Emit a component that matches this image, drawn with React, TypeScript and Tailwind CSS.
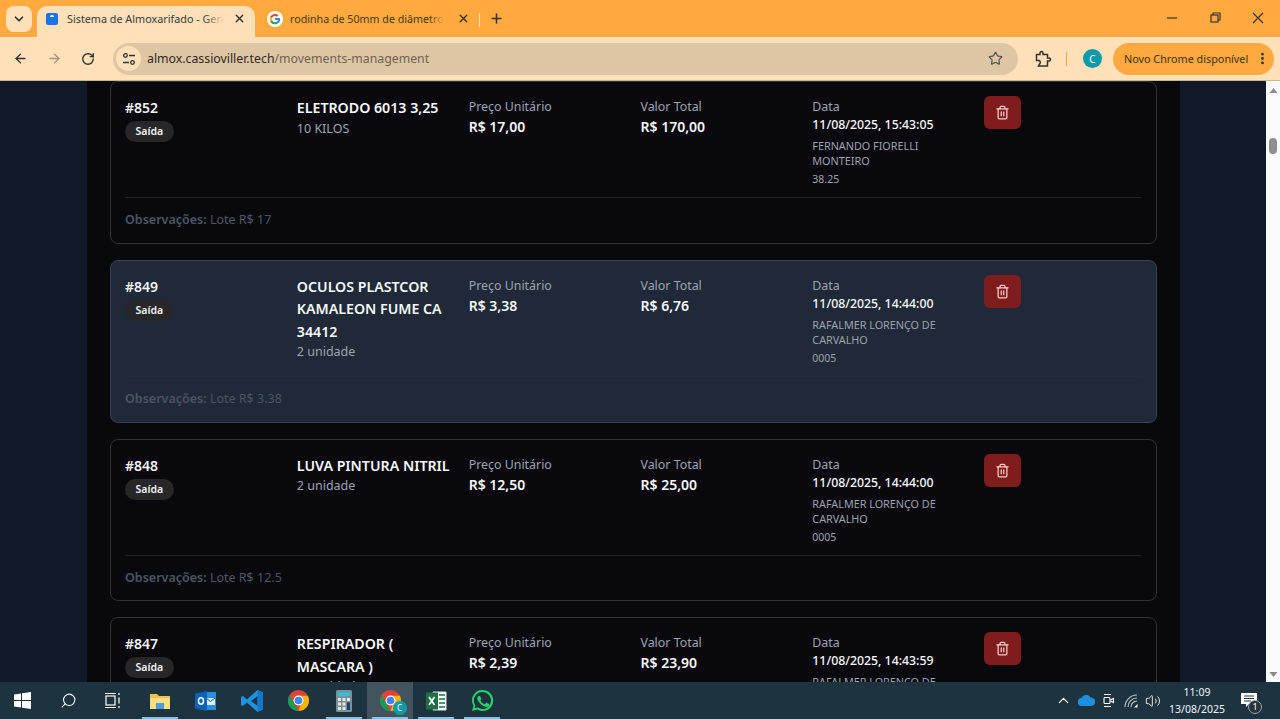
import React from "react";
import { ArrowLeft, ArrowRight, ChevronDown, ChevronUp, EllipsisVertical, Plus, RotateCw, Search, Star, Trash2, Volume2, X } from "lucide-react";

type Mov = {
  id: string; name: string; qty: string; unit: string; total: string; date: string;
  user: string; code: string; obs: string; active?: boolean;
};

const moves: Mov[] = [
  { id: "#852", name: "ELETRODO 6013 3,25", qty: "10 KILOS", unit: "R$ 17,00", total: "R$ 170,00", date: "11/08/2025, 15:43:05", user: "FERNANDO FIORELLI MONTEIRO", code: "38.25", obs: "Lote R$ 17" },
  { id: "#849", name: "OCULOS PLASTCOR KAMALEON FUME CA 34412", qty: "2 unidade", unit: "R$ 3,38", total: "R$ 6,76", date: "11/08/2025, 14:44:00", user: "RAFALMER LORENÇO DE CARVALHO", code: "0005", obs: "Lote R$ 3.38", active: true },
  { id: "#848", name: "LUVA PINTURA NITRIL", qty: "2 unidade", unit: "R$ 12,50", total: "R$ 25,00", date: "11/08/2025, 14:44:00", user: "RAFALMER LORENÇO DE CARVALHO", code: "0005", obs: "Lote R$ 12.5" },
  { id: "#847", name: "RESPIRADOR ( MASCARA )", qty: "10 unidade", unit: "R$ 2,39", total: "R$ 23,90", date: "11/08/2025, 14:43:59", user: "RAFALMER LORENÇO DE CARVALHO", code: "0005", obs: "Lote R$ 2.39" },
];

function Card({ m }: { m: Mov }) {
  return (
    <div className={`h-[162.8px] shrink-0 rounded-lg border pl-[14px] pr-[15px] pt-[14px] ${m.active ? "bg-[#1f2937] border-[#374151]" : "bg-[#09090d] border-[#2f3136]"}`}>
      <div className="mr-[1px] grid h-[101px] grid-cols-6 gap-4">
        <div>
          <div className="text-[14px] font-semibold leading-[23px] text-[#f3f4f6]">{m.id}</div>
          <span className="mt-[2px] inline-block h-[21px] rounded-full bg-[#27272a] px-[10.500px] align-top text-[10.500px] font-semibold leading-[21px] text-[#f3f4f6]">Saída</span>
        </div>
        <div>
          <div className="pt-px text-[14.2px] font-semibold leading-[22.5px] text-[#f9fafb]">{m.name}</div>
          <div className="-mt-px text-[12.5px] leading-5 text-[#9ca3af]">{m.qty}</div>
        </div>
        <div>
          <div className="pt-[2px] text-[12.4px] leading-[18px] text-[#9ca3af]">Preço Unitário</div>
          <div className="-mt-px text-[14px] font-semibold leading-6 text-[#f9fafb]">{m.unit}</div>
        </div>
        <div>
          <div className="pt-[2px] text-[12.4px] leading-[18px] text-[#9ca3af]">Valor Total</div>
          <div className="-mt-px text-[14px] font-semibold leading-6 text-[#f9fafb]">{m.total}</div>
        </div>
        <div>
          <div className="pt-[2px] text-[12.4px] leading-[18px] text-[#9ca3af]">Data</div>
          <div className="-mt-px whitespace-nowrap text-[12.3px] font-medium leading-5 text-[#f9fafb]">{m.date}</div>
          <div className="mt-[3px] text-[10.8px] leading-[15px] text-[#9ca3af]">{m.user}</div>
          <div className="mt-1 text-[10.5px] leading-[15px] text-[#9ca3af]">{m.code}</div>
        </div>
        <div>
          <button className="flex h-[33px] w-[37px] items-center justify-center rounded-md bg-[#7f1d1d] text-[#fecaca]">
            <Trash2 size={15} strokeWidth={2} />
          </button>
        </div>
      </div>
      <div className={`border-t pt-[12px] text-[12.5px] leading-5 text-[#4b5563] ${m.active ? "border-[#222c3a]" : "border-[#1f2126]"}`}>
        <span className="font-semibold">Observações:</span> {m.obs}
      </div>
    </div>
  );
}

function GoogleG() {
  return (
    <svg viewBox="0 0 48 48" className="h-4 w-4">
      <circle cx="24" cy="24" r="24" fill="#fff" />
      <g transform="translate(6.500 6.500) scale(0.73)">
        <path fill="#4285F4" d="M45 24.5c0-1.6-.1-3-.4-4.5H24v8.500h11.800c-.5 2.700-2.100 5-4.400 6.600v5.500h7.100C42.600 36.800 45 31.200 45 24.500z" />
        <path fill="#34A853" d="M24 46c5.900 0 10.900-2 14.500-5.400l-7.100-5.500c-2 1.300-4.500 2.100-7.400 2.100-5.700 0-10.500-3.800-12.200-9H4.500v5.700C8.100 41.100 15.500 46 24 46z" />
        <path fill="#FBBC05" d="M11.800 28.700c-.9-2.700-.9-5.700 0-8.400v-5.700H4.500c-3 6-3 13.800 0 19.800l7.300-5.700z" />
        <path fill="#EA4335" d="M24 11.600c3.200 0 6.100 1.100 8.400 3.300l6.300-6.300C34.900 5 29.900 3 24 3 15.500 3 8.100 7.900 4.500 14.600l7.300 5.700c1.700-5.100 6.500-8.700 12.200-8.700z" />
      </g>
    </svg>
  );
}

function ChromeLogo({ size = 24 }: { size?: number }) {
  return (
    <svg viewBox="0 0 48 48" width={size} height={size}>
      <circle cx="24" cy="24" r="22" fill="#DB4437" />
      <path fill="#0F9D58" d="M5 13l10.500 18.500L24 46C12 46 2 36 2 24c0-4 1-7.800 3-11z" />
      <path fill="#F4B400" d="M24 46c12.100 0 22-9.900 22-22 0-3.600-.9-7-2.500-10H24l8.500 4.500L24 46z" />
      <circle cx="24" cy="24" r="10.500" fill="#fff" />
      <circle cx="24" cy="24" r="8" fill="#4285F4" />
    </svg>
  );
}

function TaskIcon({ children, active, bar }: { children?: React.ReactNode; active?: boolean; bar?: boolean }) {
  return (
    <div className={`relative flex h-[37px] w-[46px] items-center justify-center ${active ? "bg-[#43545e]" : ""}`}>
      {children}
      {bar && <div className="absolute bottom-0 left-[5px] right-[5px] h-[2px] bg-[#8dc1e3]" />}
    </div>
  );
}

export default function App() {
  return (
    <div className="flex h-[719px] w-[1280px] flex-col overflow-hidden font-['Noto_Sans','Open_Sans',sans-serif]">
      {/* tab strip */}
      <div className="flex h-[37px] shrink-0 items-end bg-[#ffa93f] pl-[6px]">
        <div className="mb-[5px] flex h-[26px] w-[26px] items-center justify-center rounded-lg bg-[#ffe0b8] text-[#333]">
          <ChevronDown size={14} strokeWidth={3} />
        </div>
        <div className="ml-[5px] flex h-[31px] w-[218px] items-center rounded-t-[10px] bg-[#ffe0b8] pb-[6px] pl-[9px]">
          <div className="flex h-[12px] w-[12px] items-start justify-center rounded-[2px] bg-[#1a73e8]">
            <div className="mt-[2px] h-[2px] w-[4px] rounded-t bg-white" />
          </div>
          <div className="relative ml-[9px] w-[157px] overflow-hidden whitespace-nowrap text-[10.8px] leading-4 text-[#3c3c3c]">
            Sistema de Almoxarifado - Gerenciamento
            <div className="absolute inset-y-0 right-0 w-[20px] bg-linear-to-r from-transparent to-[#ffe0b8]" />
          </div>
          <X size={13} strokeWidth={2.5} className="ml-[9px] text-[#333]" />
        </div>
        <div className="flex h-[31px] w-[224px] items-center pb-[6px] pl-[12px]">
          <GoogleG />
          <div className="relative ml-[7px] w-[154px] overflow-hidden whitespace-nowrap text-[10.7px] leading-4 text-[#4a3a20]">
            rodinha de 50mm de diâmetro
            <div className="absolute inset-y-0 right-0 w-[14px] bg-linear-to-r from-transparent to-[#ffa93f]" />
          </div>
          <X size={13} strokeWidth={2.5} className="ml-[13px] text-[#333]" />
        </div>
        <div className="mb-[10px] h-[14px] w-px bg-[#ffe0b8]" />
        <Plus size={15} strokeWidth={2.5} className="mb-[11px] ml-[9px] text-[#333]" />
        <div className="flex-1" />
        <div className="mb-[7px] flex h-[24px] items-center text-[#333]">
          <svg width="46" height="24" viewBox="0 0 46 24"><path d="M23 12h10" stroke="#333" strokeWidth="1.2" /></svg>
          <svg width="46" height="24" viewBox="0 0 46 24" fill="none" stroke="#333" strokeWidth="1.2"><rect x="21" y="9" width="7" height="7" /><path d="M23 9V7h7v7h-2" /></svg>
          <svg width="44" height="24" viewBox="0 0 44 24" fill="none" stroke="#333" strokeWidth="1.2"><path d="M17 7l10 10M27 7L17 17" /></svg>
        </div>
      </div>

      {/* toolbar */}
      <div className="flex h-[44px] shrink-0 items-center border-b border-[#c9b598] bg-[#ffe0b8] pl-[13px] pr-[6px]">
        <ArrowLeft size={15} strokeWidth={2.2} className="text-[#333]" />
        <ArrowRight size={15} strokeWidth={2.2} className="ml-[19px] text-[#a3917a]" />
        <RotateCw size={14} strokeWidth={2.4} className="ml-[19px] text-[#333]" />
        <div className="ml-[18px] flex h-[32px] w-[905px] items-center rounded-full bg-[#dec6a5] pl-[3px] pr-[15px]">
          <div className="flex h-[25px] w-[25px] items-center justify-center rounded-full bg-[#ffe0b8]">
            <svg width="14" height="14" viewBox="0 0 14 14" fill="none" stroke="#333" strokeWidth="1.3"><circle cx="3.500" cy="3.500" r="1.800" /><path d="M7 3.500h6M1 10.500h6" /><circle cx="10.500" cy="10.500" r="1.800" /></svg>
          </div>
          <div className="ml-[6px] flex-1 text-[12.3px] leading-5 text-[#2e2a24]">almox.cassioviller.tech<span className="text-[#6f6453]">/movements-management</span></div>
          <Star size={15} strokeWidth={1.8} className="text-[#4a4a4a]" />
        </div>
        <svg className="ml-[16px]" width="18" height="18" viewBox="0 0 18 18" fill="none" stroke="#333" strokeWidth="1.500"><path d="M2.500 4.500h3.500V3a1.500 1.500 0 0 1 3 0v1.500h4.500V8H15a1.500 1.500 0 0 1 0 3h-1.500v5h-9L6 13.500c.8-1.500 0-3-1.200-3H2.500z" /></svg>
        <div className="ml-[14px] h-[14px] w-px bg-[#f0a33f]" />
        <div className="ml-[16px] flex h-[19px] w-[19px] items-center justify-center rounded-full bg-[#0e9aa8] text-[10px] leading-none text-white">C</div>
        <div className="ml-[11px] flex h-[32px] w-[161px] items-center rounded-full bg-[#ffa93f] pl-[11px]">
          <span className="whitespace-nowrap text-[10.8px] leading-4 text-[#3d3222]">Novo Chrome disponível</span>
          <EllipsisVertical size={15} strokeWidth={2.500} className="ml-[7px] text-[#333]" />
        </div>
      </div>

      {/* page */}
      <div className="flex min-h-0 flex-1">
        <div className="w-[87px] shrink-0 bg-[#111827]" />
        <div className="flex w-[1093px] shrink-0 flex-col gap-[16px] overflow-hidden bg-[#09090d] px-[23px]">
          {moves.map((m) => <Card key={m.id} m={m} />)}
        </div>
        <div className="w-[86px] shrink-0 bg-[#111827]" />
        <div className="relative flex w-[14px] shrink-0 flex-col items-center justify-between bg-[#fafafa]">
          <svg width="9" height="14" viewBox="0 0 9 14" className="mt-[2px]"><path d="M0.500 10L4.500 5l4 5z" fill="#8a8a8a" /></svg>
          <div className="absolute left-[3px] top-[57px] h-[16px] w-[8px] rounded-full bg-[#8f8f8f]" />
          <svg width="9" height="14" viewBox="0 0 9 14"><path d="M0.500 4l4 5 4-5z" fill="#8a8a8a" /></svg>
        </div>
      </div>

      {/* taskbar */}
      <div className="flex h-[37px] shrink-0 items-center bg-[#1d3340] pl-0 text-white">
        <div className="flex -translate-x-[1px]">
          <TaskIcon>
            <svg width="17" height="17" viewBox="0 0 17 17" fill="#fff"><path d="M0 2.500l7-1v6.500H0zM8 1.300L17 0v8H8zM0 9h7v6.500l-7-1zM8 9h9v8l-9-1.300z" /></svg>
          </TaskIcon>
          <TaskIcon><Search size={17} strokeWidth={1.500} className="-scale-x-100" /></TaskIcon>
          <TaskIcon>
            <svg width="17" height="17" viewBox="0 0 17 17" fill="none" stroke="#fff" strokeWidth="1.200" className="-translate-x-[2px]"><rect x="2" y="4" width="9" height="9" /><path d="M1 1.500h11M1 15.500h11M15 1v2M15 5.500v6M15 14v2" /></svg>
          </TaskIcon>
          <TaskIcon bar>
            <svg width="20" height="20" viewBox="0 0 20 20"><path d="M0 3h7l2 2h11v13H0z" fill="#f3c04d" /><path d="M0 7h20v11H0z" fill="#ffdf80" /><path d="M6 12h8v6H6z" fill="#4f9ad8" /></svg>
          </TaskIcon>
          <TaskIcon>
            <svg width="22" height="22" viewBox="0 0 22 22"><path d="M7 2h14v18H7z" fill="#2a8fdc" /><path d="M11 8h9v7h-9z" fill="#dfeefb" /><path d="M11 8l4.500 3.500L20 8" fill="none" stroke="#0f5ea8" /><path d="M0 3.500L12 1v20L0 18.500z" fill="#0b62b5" /><ellipse cx="6" cy="11" rx="2.500" ry="3.200" fill="none" stroke="#fff" strokeWidth="1.500" /></svg>
          </TaskIcon>
          <TaskIcon>
            <svg width="24" height="24" viewBox="0 0 24 24"><path d="M17.500 1L23 3.500v17L17.500 23 7 13.500 2.800 17 1 16V8l1.800-1L7 10.500z" fill="#1f93e3" /><path d="M17.500 7L11 12l6.500 5z" fill="#1d3340" /><path d="M17.500 1L23 3.500v17L17.500 23z" fill="#0f78c8" /></svg>
          </TaskIcon>
          <TaskIcon><ChromeLogo size={23} /></TaskIcon>
          <TaskIcon bar>
            <svg width="16" height="22" viewBox="0 0 16 22"><rect width="16" height="22" rx="1.500" fill="#7d8f9b" /><rect x="2" y="2" width="12" height="4" fill="#37bcd6" /><g fill="#e6e6e6"><rect x="2" y="8" width="3" height="3" /><rect x="6.500" y="8" width="3" height="3" /><rect x="11" y="8" width="3" height="3" /><rect x="2" y="12.500" width="3" height="3" /><rect x="6.500" y="12.500" width="3" height="3" /><rect x="2" y="17" width="3" height="3" /><rect x="6.500" y="17" width="3" height="3" /></g><rect x="11" y="12.500" width="3" height="7.500" fill="#13436b" /></svg>
          </TaskIcon>
          <TaskIcon active bar>
            <div className="relative">
              <ChromeLogo size={23} />
              <div className="absolute -bottom-[3px] -right-[5px] flex h-[14px] w-[14px] items-center justify-center rounded-full bg-[#0e9aa8] text-[8px] leading-none">C</div>
            </div>
          </TaskIcon>
          <TaskIcon bar>
            <svg width="21" height="20" viewBox="0 0 21 20"><path d="M7 1h13v18H7z" fill="#fff" stroke="#d6e6dc" /><path d="M13 4h6M13 8h6M13 12h6M13 16h6" stroke="#1d6f42" strokeWidth="1.500" /><path d="M0 1.500h12v17H0z" fill="#1d6f42" /><path d="M3 6l5.500 8M8.500 6L3 14" stroke="#fff" strokeWidth="1.600" /></svg>
          </TaskIcon>
          <TaskIcon bar>
            <svg width="23" height="23" viewBox="0 0 24 24" fill="#25d366"><path fillRule="evenodd" d="M12 1a11 11 0 0 0-9.400 16.600L1 23l5.600-1.500A11 11 0 1 0 12 1zm0 2.200a8.800 8.800 0 1 1-4.700 16.200l-.4-.2-3.200.9.900-3.100-.3-.4A8.800 8.800 0 0 1 12 3.200z" /><path d="M8.700 7c-.3 0-.7.100-1 .5-.4.400-1.100 1.200-1.100 2.500 0 1.500 1.100 2.900 1.200 3.100.2.200 2.200 3.500 5.400 4.700 2.600 1 3.200.8 3.700.8.600-.1 1.800-.7 2-1.400.3-.7.300-1.300.2-1.400-.1-.2-.3-.2-.6-.4l-2.100-1c-.3-.1-.5-.2-.7.1l-1 1.200c-.2.200-.4.300-.7.100-.3-.2-1.300-.5-2.500-1.500-.9-.8-1.500-1.800-1.700-2.100-.2-.3 0-.5.100-.6l.5-.5.300-.5c.1-.2.100-.4 0-.5l-1-2.300c-.2-.6-.5-.6-.7-.6z" /></svg>
          </TaskIcon>
        </div>
        <div className="flex-1" />
        <ChevronUp size={17} strokeWidth={1.800} />
        <svg width="17" height="11" viewBox="0 0 17 11" className="ml-[6px]"><path d="M4 11a4 4 0 0 1-.5-8 5 5 0 0 1 9-.5A4.200 4.200 0 0 1 13.500 11z" fill="#1d8fe0" /></svg>
        <svg width="13" height="17" viewBox="0 0 13 17" fill="none" stroke="#fff" strokeWidth="1.100" className="ml-[7px]"><path d="M2 2.500h7M2 14.500h7" /><rect x="2" y="5.500" width="6" height="6" rx="1" /><path d="M8.500 8l3-1.500v4L8.500 9" /></svg>
        <svg width="14" height="14" viewBox="0 0 14 14" fill="none" stroke="#bcc6cc" strokeWidth="1.100" className="ml-[9px]"><path d="M1 13A12 12 0 0 1 13 1M4 13a9 9 0 0 1 9-9M7 13a6 6 0 0 1 6-6" /><path d="M10 13.500h3.500V10z" fill="#fff" stroke="none" /></svg>
        <Volume2 size={16} strokeWidth={1.300} className="ml-[7px]" />
        <div className="ml-[5px] w-[62px] text-center text-[10.5px] leading-[17px] text-[#f2f4f5]">
          <div>11:09</div>
          <div className="whitespace-nowrap">13/08/2025</div>
        </div>
        <div className="relative ml-[13px] mr-[19px] h-[20px] w-[20px]">
          <svg width="16" height="15" viewBox="0 0 16 15" className="mt-[2px]"><path d="M0 0h16v11H8l-3 3v-3H0z" fill="#fff" /><path d="M3 3h10M3 5.500h10M3 8h7" stroke="#1d3340" /></svg>
          <div className="absolute -bottom-[3px] -right-[1px] flex h-[14px] w-[14px] items-center justify-center rounded-full border border-[#9aa5ab] bg-[#28343b] text-[9px] leading-none">1</div>
        </div>
      </div>
    </div>
  );
}
